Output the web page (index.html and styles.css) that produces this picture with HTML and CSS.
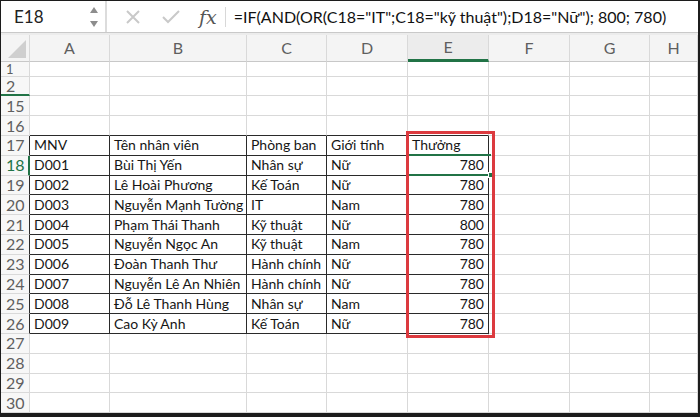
FILE: index.html
```html
<!DOCTYPE html>
<html lang="vi">
<head>
<meta charset="utf-8">
<title>Excel</title>
<link rel="stylesheet" href="styles.css">
</head>
<body>
<div class="frame">
  <div class="fbar">
    <div class="namebox">
      <span class="ref">E18</span>
      <svg class="spin" width="10" height="22" viewBox="0 0 10 22"><path d="M5 1 L9 7 L1 7 Z" fill="#8d8d8d"/><path d="M1 15 L9 15 L5 21 Z" fill="#8d8d8d"/></svg>
    </div>
    <div class="tools">
      <svg class="ico" width="18" height="18" viewBox="0 0 18 18"><path d="M3 3 L15 15 M15 3 L3 15" stroke="#c9c9c9" stroke-width="2" fill="none"/></svg>
      <svg class="ico" width="20" height="18" viewBox="0 0 20 18"><path d="M2 9 L7 14 L18 3" stroke="#c9c9c9" stroke-width="2" fill="none"/></svg>
      <span class="fx">fx</span>
    </div>
    <div class="formula">=IF(AND(OR(C18="IT";C18="kỹ thuật");D18="Nữ"); 800; 780)</div>
  </div>
  <div class="band"></div>
  <div class="wrap">
    <div class="sheet">
      <div class="c ch corner"><svg width="20" height="20" viewBox="0 0 20 20"><path d="M19 1 L19 19 L1 19 Z" fill="#cfcfcf"/></svg></div>
      <div class="c ch">A</div><div class="c ch">B</div><div class="c ch">C</div><div class="c ch">D</div><div class="c ch sel">E</div><div class="c ch">F</div><div class="c ch">G</div><div class="c ch">H</div>

      <div class="c rh short">1</div><div class="c"></div><div class="c"></div><div class="c"></div><div class="c"></div><div class="c"></div><div class="c"></div><div class="c"></div><div class="c"></div>
      <div class="c rh hid">2</div><div class="c"></div><div class="c"></div><div class="c"></div><div class="c"></div><div class="c"></div><div class="c"></div><div class="c"></div><div class="c"></div>
      <div class="c rh">15</div><div class="c"></div><div class="c"></div><div class="c"></div><div class="c"></div><div class="c"></div><div class="c"></div><div class="c"></div><div class="c"></div>
      <div class="c rh">16</div><div class="c tb"></div><div class="c tb"></div><div class="c tb"></div><div class="c tb"></div><div class="c tb"></div><div class="c"></div><div class="c"></div><div class="c"></div>

      <div class="c rh tl">17</div><div class="c t">MNV</div><div class="c t">Tên nhân viên</div><div class="c t">Phòng ban</div><div class="c t">Giới tính</div><div class="c t">Thưởng</div><div class="c"></div><div class="c"></div><div class="c"></div>
      <div class="c rh tl act">18</div><div class="c t">D001</div><div class="c t">Bùi Thị Yến</div><div class="c t">Nhân sự</div><div class="c t">Nữ</div><div class="c t n">780</div><div class="c"></div><div class="c"></div><div class="c"></div>
      <div class="c rh tl">19</div><div class="c t">D002</div><div class="c t">Lê Hoài Phương</div><div class="c t">Kế Toán</div><div class="c t">Nữ</div><div class="c t n">780</div><div class="c"></div><div class="c"></div><div class="c"></div>
      <div class="c rh tl">20</div><div class="c t">D003</div><div class="c t">Nguyễn Mạnh Tường</div><div class="c t">IT</div><div class="c t">Nam</div><div class="c t n">780</div><div class="c"></div><div class="c"></div><div class="c"></div>
      <div class="c rh tl">21</div><div class="c t">D004</div><div class="c t">Phạm Thái Thanh</div><div class="c t">Kỹ thuật</div><div class="c t">Nữ</div><div class="c t n">800</div><div class="c"></div><div class="c"></div><div class="c"></div>
      <div class="c rh tl">22</div><div class="c t">D005</div><div class="c t">Nguyễn Ngọc An</div><div class="c t">Kỹ thuật</div><div class="c t">Nam</div><div class="c t n">780</div><div class="c"></div><div class="c"></div><div class="c"></div>
      <div class="c rh tl">23</div><div class="c t">D006</div><div class="c t">Đoàn Thanh Thư</div><div class="c t">Hành chính</div><div class="c t">Nữ</div><div class="c t n">780</div><div class="c"></div><div class="c"></div><div class="c"></div>
      <div class="c rh tl">24</div><div class="c t">D007</div><div class="c t">Nguyễn Lê An Nhiên</div><div class="c t">Hành chính</div><div class="c t">Nữ</div><div class="c t n">780</div><div class="c"></div><div class="c"></div><div class="c"></div>
      <div class="c rh tl">25</div><div class="c t">D008</div><div class="c t">Đỗ Lê Thanh Hùng</div><div class="c t">Nhân sự</div><div class="c t">Nam</div><div class="c t n">780</div><div class="c"></div><div class="c"></div><div class="c"></div>
      <div class="c rh tl">26</div><div class="c t">D009</div><div class="c t">Cao Kỳ Anh</div><div class="c t">Kế Toán</div><div class="c t">Nữ</div><div class="c t n">780</div><div class="c"></div><div class="c"></div><div class="c"></div>

      <div class="c rh">27</div><div class="c"></div><div class="c"></div><div class="c"></div><div class="c"></div><div class="c"></div><div class="c"></div><div class="c"></div><div class="c"></div>
      <div class="c rh">28</div><div class="c"></div><div class="c"></div><div class="c"></div><div class="c"></div><div class="c"></div><div class="c"></div><div class="c"></div><div class="c"></div>
      <div class="c rh">29</div><div class="c"></div><div class="c"></div><div class="c"></div><div class="c"></div><div class="c"></div><div class="c"></div><div class="c"></div><div class="c"></div>
      <div class="c rh">30</div><div class="c"></div><div class="c"></div><div class="c"></div><div class="c"></div><div class="c"></div><div class="c"></div><div class="c"></div><div class="c"></div>
    </div>
    <div class="selbox"><span class="handle"></span></div>
    <div class="redbox"></div>
  </div>
</div>
</body>
</html>
```

FILE: styles.css
```css
* { box-sizing: border-box; }
html, body { margin: 0; padding: 0; background: #1c1c1c; }
body { width: 700px; height: 417px; overflow: hidden; }

.frame {
  width: 700px;
  height: 417px;
  border: 1px solid #1c1c1c;
  border-right-width: 2px;
  border-bottom-width: 4px;
  background: #ffffff;
  overflow: hidden;
  font-family: Lato, "Open Sans", sans-serif;
  color: #161616;
}

.fbar {
  height: 32px;
  display: flex;
  align-items: center;
  background: #ffffff;
  border-bottom: 1px solid #c9c9c9;
}
.namebox {
  width: 106px;
  height: 100%;
  display: flex;
  align-items: center;
  justify-content: space-between;
  padding: 0 6px 0 13px;
  border-right: 2px solid #dcdcdc;
}
.ref { font-size: 17px; color: #222; }
.tools {
  display: flex;
  align-items: center;
  height: 100%;
  padding-left: 17px;
}
.tools .ico:first-child { margin-right: 19px; }
.tools .ico:nth-child(2) { margin-right: 18px; }
.fx {
  font-family: "DejaVu Serif", "Liberation Serif", serif;
  font-style: italic;
  font-size: 19px;
  color: #555;
  padding-right: 8px;
  border-right: 1px solid #d8d8d8;
  line-height: 20px;
}
.formula {
  padding-left: 8px;
  font-size: 16px;
  color: #111;
  white-space: nowrap;
}

.band { height: 2px; background: #ececec; }

.wrap { position: relative; }
.sheet {
  display: grid;
  grid-template-columns: 29px 80px 137px 80px 81px 81px 81px 80px 1fr;
  grid-template-rows: 27px 15px 19px 20px 20px repeat(14, 19.8px);
  font-size: 14px;
  line-height: 1;
}
.c {
  border-right: 1px solid #d9d9d9;
  border-bottom: 1px solid #d9d9d9;
  display: flex;
  align-items: center;
  padding: 0 4px;
  white-space: nowrap;
  overflow: hidden;
}
.ch {
  background: #f4f4f4;
  justify-content: center;
  color: #5f5f5f;
  font-size: 16px;
  border-bottom-color: #c8c8c8;
}
.corner { justify-content: flex-end; align-items: flex-end; padding: 0 2px 2px 0; }
.ch.sel { border-bottom: 3px solid #217346; background: #ececec; }
.rh {
  background: #f7f7f7;
  color: #5f5f5f;
  font-size: 16px;
  padding-left: 5px;
}
.rh.short { font-size: 13px; overflow: visible; }
.rh.hid { border-bottom: 2px solid #217346; }
.rh.act { color: #217346; border-right: 2px solid #217346; }
.rh.tl:not(.act) { border-right-color: #2a2a2a; }
.tb { border-bottom-color: #2a2a2a; }
.t { border-right-color: #2a2a2a; border-bottom-color: #2a2a2a; }
.n { justify-content: flex-end; }

.selbox {
  position: absolute;
  left: 407px;
  top: 119px;
  width: 83px;
  height: 22px;
  border-top: 2px solid #217346;
  border-bottom: 2px solid #217346;
}
.handle {
  position: absolute;
  right: -3px;
  bottom: -4px;
  width: 6px;
  height: 6px;
  background: #217346;
  border: 1px solid #fff;
}
.redbox {
  position: absolute;
  left: 405px;
  top: 96px;
  width: 89px;
  height: 207px;
  border: 3px solid #dc3a3f;
}
```
